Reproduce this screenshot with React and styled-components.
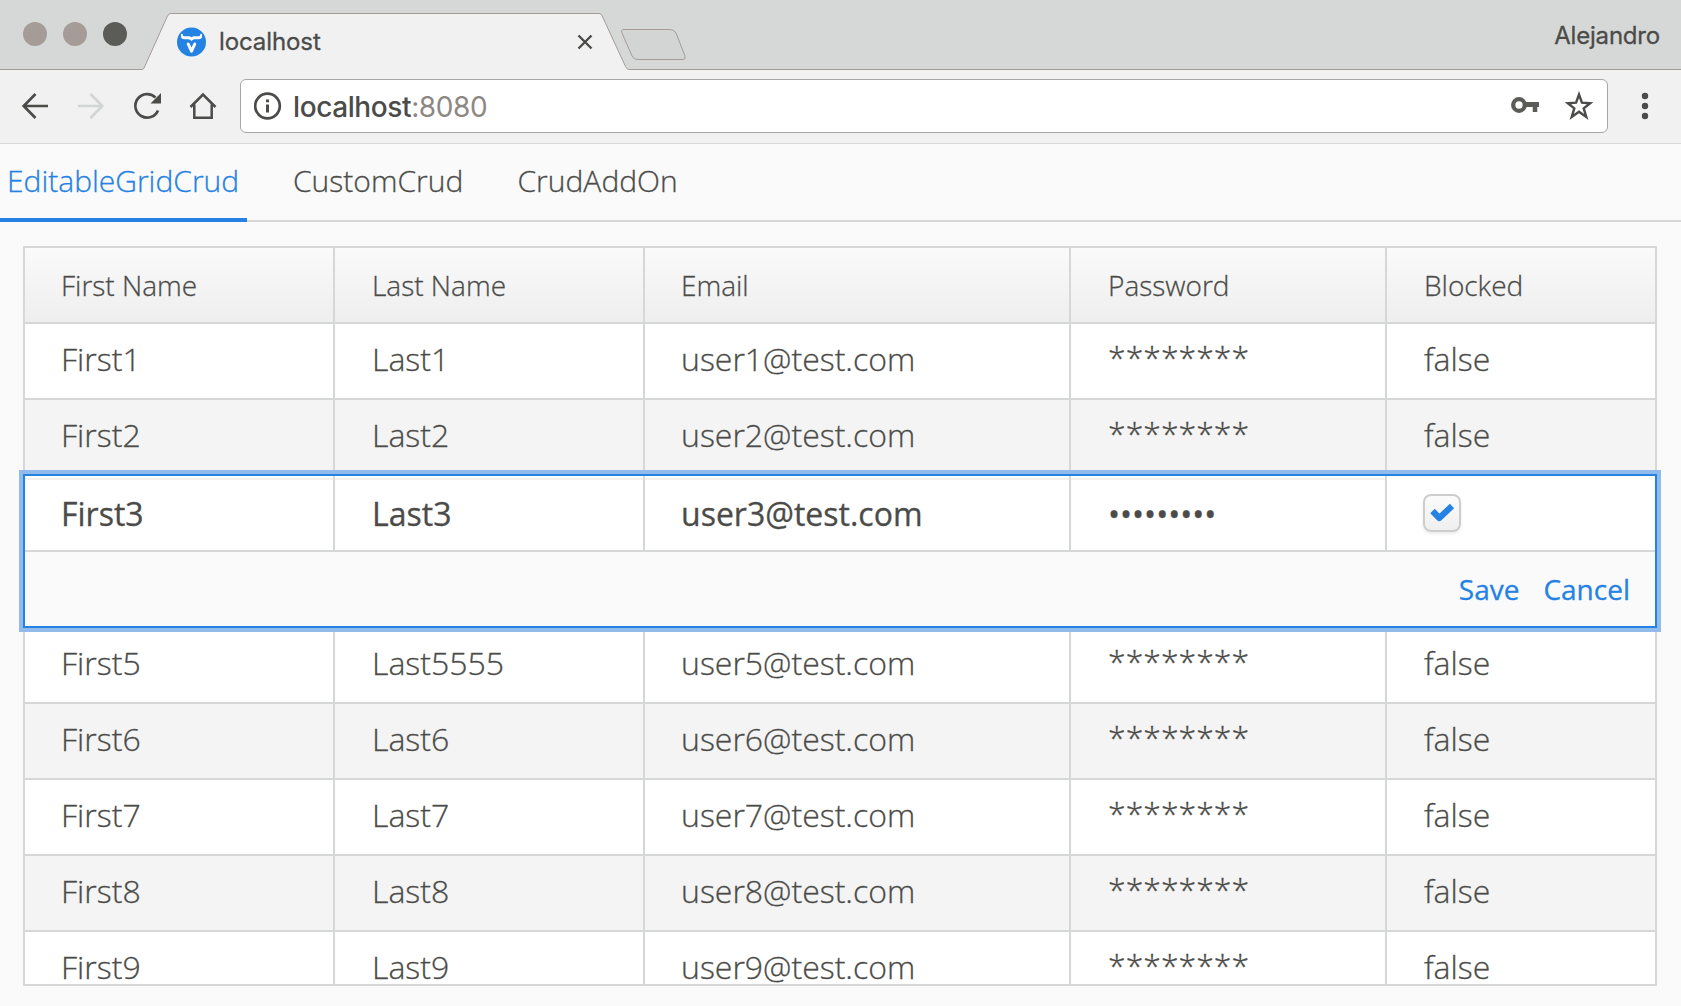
import React from "react";
import styled, { createGlobalStyle } from "styled-components";

const INK = "#4b4c49";
const LINE = "#d6d7d7";
const BLUE = "#2482e2";
const TAUPE = "#a59c98";
const CHROME_FONT = 'Inter, "Liberation Sans", sans-serif';

const GlobalStyle = createGlobalStyle`
  *, *::before, *::after { box-sizing: border-box; }
  body { margin: 0; background: #fafafa; overflow: hidden; }
`;

const Window = styled.div`
  display: flex;
  flex-direction: column;
  width: 1681px;
  height: 1006px;
  overflow: hidden;
  background: #fafafa;
  color: ${INK};
  font-family: "Open Sans", "Noto Sans", sans-serif;
  font-weight: 300;
`;

const TabStrip = styled.header`
  position: relative;
  display: flex;
  flex: none;
  height: 70px;
  padding: 0 21px 0 23px;
  background: #d6d8d7;
`;

const TabOutline = styled.svg`
  position: absolute;
  left: 0;
  top: 0;
`;

const WindowButtons = styled.div`
  display: flex;
  gap: 16px;
  padding-top: 22px;
  width: 154px;
`;

const Dot = styled.span`
  width: 24px;
  height: 24px;
  border-radius: 50%;
  background: ${(p) => p.$color};
`;

const BrowserTab = styled.div`
  position: relative;
  display: flex;
  align-items: center;
  width: 416px;
  height: 56px;
  margin-top: 14px;
`;

const TabTitle = styled.span`
  flex: 1;
  margin-left: 13px;
  padding-bottom: 1px;
  font: 400 24px/30px ${CHROME_FONT};
  letter-spacing: -0.1px;
  -webkit-text-stroke: 0.3px;
`;

const Profile = styled.span`
  position: relative;
  margin-left: auto;
  margin-top: 21px;
  font: 400 24px/30px ${CHROME_FONT};
  letter-spacing: -0.2px;
  -webkit-text-stroke: 0.3px;
`;

const Toolbar = styled.div`
  display: flex;
  align-items: center;
  flex: none;
  height: 74px;
  padding: 0 26px 1px 20px;
  background: #f1f1f1;
  border-bottom: 1px solid ${LINE};
`;

const NavButtons = styled.div`
  display: flex;
  gap: 24px;
  width: 220px;
`;

const AddressBar = styled.div`
  display: flex;
  align-items: center;
  width: 1368px;
  height: 54px;
  padding: 0 13px;
  border: 1px solid #a9a7a6;
  border-radius: 6px;
  background: #fff;
`;

const Url = styled.span`
  flex: 1;
  margin-left: 11px;
  padding-top: 1px;
  font: 500 28px/32px ${CHROME_FONT};
  letter-spacing: -0.4px;
`;

const Port = styled.span`
  font-weight: 400;
  color: #8d8784;
`;

const StarSlot = styled.span`
  display: flex;
  margin-left: 24px;
`;

const MenuSlot = styled.span`
  display: flex;
  margin-left: auto;
`;

const PageTabs = styled.nav`
  display: flex;
  flex: none;
  height: 78px;
  box-shadow: inset 0 -2px ${LINE};
`;

const PageTab = styled.a`
  height: 78px;
  width: ${(p) => p.$width}px;
  padding-left: ${(p) => (p.$active ? 7 : 46)}px;
  padding-top: 16px;
  font-size: 30px;
  line-height: 41px;
  -webkit-text-stroke: 0.3px;
  color: ${(p) => (p.$active ? BLUE : INK)};
  border-bottom: ${(p) => (p.$active ? `4px solid ${BLUE}` : "0")};
`;

const Grid = styled.main`
  flex: none;
  width: 1634px;
  height: 740px;
  margin: 24px 0 0 23px;
  border: 2px solid ${LINE};
`;

const GridBody = styled.div`
  height: 736px;
  overflow: clip;
  margin: 0 -6px;
  padding: 0 6px;
`;

const Row = styled.div`
  display: grid;
  grid-template-columns: 310px 310px 426px 316px 268px;
  height: 76px;
  background: ${(p) => (p.$striped ? "#f4f4f4" : "#fff")};
`;

const HeaderRow = styled(Row)`
  background: linear-gradient(#fafafa, #eeeeee);
`;

const Cell = styled.div`
  height: 76px;
  padding: 0 0 0 36px;
  font-size: 32px;
  line-height: 70px;
  white-space: nowrap;
  -webkit-text-stroke: 0.3px;
  border-right: 2px solid ${LINE};
  border-bottom: 2px solid ${LINE};
  &:nth-child(even), &:last-child { padding-left: 37px; }
  &:last-child { border-right: 0; }
`;

const PasswordCell = styled(Cell)`
  line-height: 66px;
`;

const HeaderCell = styled(Cell)`
  font-size: 28px;
  line-height: 74px;
`;

const Editor = styled.section`
  position: relative;
  width: 1634px;
  height: 154px;
  margin: -2px 0 0 -2px;
  border: 2px solid ${BLUE};
  box-shadow: 0 0 0 4px #90bbea;
  background: #fafafa;
`;

const EditCell = styled(Cell)`
  display: flex;
  align-items: center;
  padding-top: 2px;
  font-weight: 400;
  background: linear-gradient(#fff 2px, #f1f1f1 2px, #f1f1f1 4px, #fff 4px);
  &:last-child { background: #fff; padding: 0 0 0 36px; }
`;

const Checkbox = styled.span`
  display: grid;
  place-items: center;
  width: 38px;
  height: 38px;
  border: 2px solid #cdcdcd;
  border-radius: 8px;
  background: linear-gradient(#fbfbfb, #efefef);
  box-shadow: 0 2px 3px rgba(0, 0, 0, 0.08);
`;

const EditorActions = styled.div`
  display: flex;
  justify-content: flex-end;
  gap: 24px;
  padding: 17px 25px 0 0;
`;

const Action = styled.a`
  font-size: 28px;
  line-height: 40px;
  font-weight: 400;
  -webkit-text-stroke: 0.3px;
  color: ${BLUE};
`;

const before = ["1", "2"];
const after = ["5", "6", "7", "8", "9"];

function Record({ n, striped }) {
  return (
    <Row $striped={striped}>
      <Cell>First{n}</Cell>
      <Cell>Last{n === "5" ? "5555" : n}</Cell>
      <Cell>user{n}@test.com</Cell>
      <PasswordCell>********</PasswordCell>
      <Cell>false</Cell>
    </Row>
  );
}

function Favicon() {
  return (
    <svg width="29" height="30" viewBox="0 0 29 30">
      <circle cx="14.5" cy="15" r="14.5" fill={BLUE} />
      <path d="M4 7.500Q4 6.800 4.800 6.800Q5.800 6.800 5.800 8Q5.800 9.200 7.500 9.200H12.500L14.500 10.200L16.500 9.200H21.500Q23.200 9.200 23.200 8Q23.200 6.800 24.200 6.800Q25 6.800 25 7.500V9.500Q25 12.300 21.500 12.300H17.500Q16 12.300 14.500 14Q13 12.300 11.500 12.300H7.500Q4 12.300 4 9.500Z" fill="#fff" />
      <path d="M11.200 17L14.500 24.200L17.800 17" fill="none" stroke="#fff" strokeWidth="3" strokeLinecap="round" strokeLinejoin="round" />
    </svg>
  );
}

export default function App() {
  return (
    <>
      <GlobalStyle />
      <Window>
        <TabStrip>
          <TabOutline width="1681" height="70" viewBox="0 0 1681 70">
            <path d="M0 69.5H142Q143.500 69.500 144.500 67L167.500 16Q168.700 13.500 171 13.500H599Q601 13.500 602.200 16L625.500 66.500Q627 69.500 629 69.500H1681V71H0Z" fill="#f1f1f1" stroke={TAUPE} />
            <path d="M624 29.500H670Q674 29.500 676 33L685 56Q686 59.500 683 59.500H637Q634 59.500 632 56L622 33Q620.500 29.500 624 29.500Z" fill="#d3d5d4" stroke={TAUPE} />
          </TabOutline>
          <WindowButtons>
            <Dot $color={TAUPE} />
            <Dot $color={TAUPE} />
            <Dot $color="#5b5b58" />
          </WindowButtons>
          <BrowserTab>
            <Favicon />
            <TabTitle>localhost</TabTitle>
            <svg width="16" height="16" viewBox="0 0 16 16" stroke={INK} strokeWidth="2.4">
              <path d="M1.500 1.500L14.500 14.500M14.500 1.500L1.500 14.500" />
            </svg>
          </BrowserTab>
          <Profile>Alejandro</Profile>
        </TabStrip>
        <Toolbar>
          <NavButtons>
            <svg width="32" height="32" viewBox="0 0 32 32" fill="none" stroke={INK} strokeWidth="2.700">
              <path d="M28 16H4M15.500 4L3.700 16L15.500 28" />
            </svg>
            <svg width="32" height="32" viewBox="0 0 32 32" fill="none" stroke="#d3d5d5" strokeWidth="2.700">
              <path d="M2 16H26M14.500 4L26.300 16L14.500 28" />
            </svg>
            <svg width="32" height="32" viewBox="0 0 32 32" fill="none" stroke={INK} strokeWidth="2.700">
              <path d="M26 20.500A11.800 11.800 0 1 1 23.500 7.500" />
              <path d="M29 3V13.500H18.500Z" fill={INK} stroke="none" />
            </svg>
            <svg width="32" height="32" viewBox="0 0 32 32" fill="none" stroke={INK} strokeWidth="2.500">
              <path d="M2.500 17L15 4.500L27.500 17M6.300 14.500V27.700H23.700V14.500" />
            </svg>
          </NavButtons>
          <AddressBar>
            <svg width="28" height="28" viewBox="0 0 28 28" fill="none" stroke={INK} strokeWidth="2.700">
              <circle cx="13.500" cy="14" r="12.300" />
              <path d="M13.500 12.500V20.500M13.500 7.500V10.200" strokeWidth="3" />
            </svg>
            <Url>localhost<Port>:8080</Port></Url>
            <svg width="30" height="18" viewBox="0 0 30 18" fill="none" stroke="#5b5b58">
              <circle cx="9" cy="8" r="5.800" strokeWidth="4.300" />
              <path d="M15 7.500H29" strokeWidth="5" />
              <path d="M25 8V15" strokeWidth="4.500" />
            </svg>
            <StarSlot>
              <svg width="30" height="30" viewBox="0 0 30 30" fill="none" stroke={INK} strokeWidth="2.400">
                <path d="M15 3.500L17.900 11.700L26.200 12.200L19.700 17.400L22.300 26L15 20.800L7.700 26L10.300 17.400L3.800 12.200L12.100 11.700Z" />
              </svg>
            </StarSlot>
          </AddressBar>
          <MenuSlot>
            <svg width="20" height="28" viewBox="0 0 20 28" fill={INK}>
              <circle cx="10" cy="4" r="3.200" />
              <circle cx="10" cy="14" r="3.200" />
              <circle cx="10" cy="24" r="3.200" />
            </svg>
          </MenuSlot>
        </Toolbar>
        <PageTabs>
          <PageTab $active $width={247}>EditableGridCrud</PageTab>
          <PageTab $width={224.5}>CustomCrud</PageTab>
          <PageTab $width={230}>CrudAddOn</PageTab>
        </PageTabs>
        <Grid>
          <GridBody>
            <HeaderRow>
              <HeaderCell>First Name</HeaderCell>
              <HeaderCell>Last Name</HeaderCell>
              <HeaderCell>Email</HeaderCell>
              <HeaderCell>Password</HeaderCell>
              <HeaderCell>Blocked</HeaderCell>
            </HeaderRow>
            {before.map((n, i) => <Record key={n} n={n} striped={i % 2 === 1} />)}
            <Editor>
              <Row>
                <EditCell>First3</EditCell>
                <EditCell>Last3</EditCell>
                <EditCell>user3@test.com</EditCell>
                <EditCell>•••••••••</EditCell>
                <EditCell>
                  <Checkbox>
                    <svg width="26" height="22" viewBox="0 0 26 22" fill="none" stroke={BLUE} strokeWidth="6.200" strokeLinejoin="round">
                      <path d="M3.500 9L10.300 16L23 4" />
                    </svg>
                  </Checkbox>
                </EditCell>
              </Row>
              <EditorActions>
                <Action>Save</Action>
                <Action>Cancel</Action>
              </EditorActions>
            </Editor>
            {after.map((n, i) => <Record key={n} n={n} striped={i % 2 === 1} />)}
          </GridBody>
        </Grid>
      </Window>
    </>
  );
}
